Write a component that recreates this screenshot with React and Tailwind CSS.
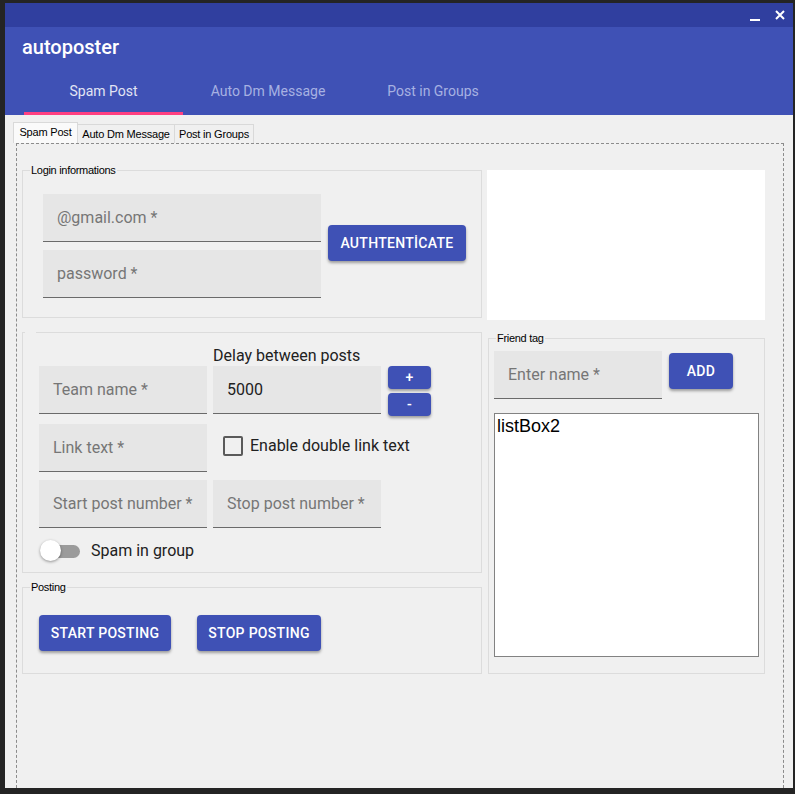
import React from 'react';

// Material-ish text field (filled, underline)
const Field = ({ placeholder, value, width = 'w-[168px]' }) => (
  <div className={`${width} h-[48px] bg-[#e6e6e6] border-b border-[#6a6a6a] flex items-center pl-[14px] font-[Roboto] text-[16px]`}>
    {value ? (
      <span className="text-[#212121]">{value}</span>
    ) : (
      <span className="text-[#767676]">{placeholder}</span>
    )}
  </div>
);

const MatButton = ({ children, className = '' }) => (
  <button
    className={`h-[36px] rounded-[4px] bg-[#3f51b5] text-white font-[Roboto] font-medium text-[14px] tracking-[0.3px] shadow-[0_2px_3px_rgba(0,0,0,0.35)] flex items-center justify-center ${className}`}
  >
    {children}
  </button>
);

// WinForms style group box
const GroupBox = ({ label, className = '', children, gapLabel }) => (
  <div className={`relative border border-[#dcdcdc] ${className}`}>
    {label && (
      <span className="absolute -top-[8px] left-[7px] px-[1px] bg-[#f0f0f0] font-['Liberation_Sans'] text-[11px] tracking-[-0.3px] leading-[14px] text-black">
        {label}
      </span>
    )}
    {gapLabel && <span className="absolute -top-[2px] left-[2px] w-[11px] h-[3px] bg-[#f0f0f0]" />}
    {children}
  </div>
);

const App = () => {
  return (
    <div className="w-[795px] h-[794px] bg-[#242424] pt-[3px] pl-[5px] pr-[2px] pb-[6px] overflow-hidden">
      <div className="w-[788px] h-[785px] flex flex-col bg-[#f0f0f0] overflow-hidden">
        {/* title bar */}
        <div className="h-[24px] bg-[#303f9f] flex items-center justify-end pr-[8px] gap-[15px] shrink-0">
          <svg width="10" height="10" viewBox="0 0 10 10" className="mt-[4px]">
            <rect x="0" y="7" width="10" height="2" fill="white" />
          </svg>
          <svg width="10" height="10" viewBox="0 0 10 10">
            <path d="M1 1 L9 9 M9 1 L1 9" stroke="white" strokeWidth="2" />
          </svg>
        </div>

        {/* header */}
        <div className="h-[88px] bg-[#3f51b5] flex flex-col shrink-0">
          <div className="pl-[17px] pt-[6px] font-[Roboto] font-medium text-[20px] leading-[28px] text-white">
            autoposter
          </div>
          <div className="mt-auto flex h-[48px] pl-[19px] font-[Roboto] text-[14px]">
            <div className="w-[159px] flex flex-col">
              <div className="flex-1 flex items-center justify-center pt-[4px] text-[#e2e5f4]">Spam Post</div>
              <div className="h-[3px] bg-[#ff4081]" />
            </div>
            <div className="w-[170px] flex items-center justify-center text-[#a7b1e2]">Auto Dm Message</div>
            <div className="w-[160px] flex items-center justify-center text-[#a7b1e2]">Post in Groups</div>
          </div>
        </div>

        {/* body */}
        <div className="flex-1 pt-[7px] pl-[8px] flex flex-col">
          {/* winforms tab strip */}
          <div className="h-[21px] flex items-end font-['Liberation_Sans'] text-[11px] tracking-[-0.2px] text-black">
            <div className="w-[65px] h-[21px] bg-[#fafafa] border border-b-0 border-[#d9d9d9] flex items-center justify-center pb-[1px] relative z-10">
              Spam Post
            </div>
            <div className="w-[97px] h-[19px] bg-[#f0f0f0] border border-l-0 border-b-0 border-[#d9d9d9] flex items-center justify-center">
              Auto Dm Message
            </div>
            <div className="w-[79px] h-[19px] bg-[#f0f0f0] border border-l-0 border-b-0 border-[#d9d9d9] flex items-center justify-center">
              Post in Groups
            </div>
          </div>

          {/* tab page */}
          <div className="ml-[3px] w-[768px] flex-1 border border-b-0 border-dashed border-[#8c8c8c] pl-[5px] pt-[26px] flex gap-[5px]">
            {/* left column */}
            <div className="w-[460px] flex flex-col">
              <GroupBox label="Login informations" className="h-[148px] pl-[20px] pt-[23px] flex items-start">
                <div className="flex flex-col gap-[8px]">
                  <Field placeholder="@gmail.com *" width="w-[278px]" />
                  <Field placeholder="password *" width="w-[278px]" />
                </div>
                <MatButton className="ml-[7px] mt-[31px] w-[138px]">AUTHTENTİCATE</MatButton>
              </GroupBox>

              <GroupBox gapLabel className="mt-[14px] h-[241px] pl-[16px] pt-[12px]">
                <div className="h-[21px] pl-[174px] font-[Roboto] text-[16px] leading-[21px] text-[#212121]">
                  Delay between posts
                </div>
                <div className="h-[48px] flex items-start gap-[6px]">
                  <Field placeholder="Team name *" />
                  <Field value="5000" />
                  <div className="ml-[1px] flex flex-col gap-[4px]">
                    <MatButton className="w-[43px] !h-[23px] text-[13px] font-bold">+</MatButton>
                    <MatButton className="w-[43px] !h-[23px] text-[13px] font-bold">-</MatButton>
                  </div>
                </div>
                <div className="mt-[10px] flex items-center">
                  <Field placeholder="Link text *" />
                  <div className="ml-[16px] w-[20px] h-[20px] border-2 border-[#5a5a5a] rounded-[2px] -mt-[4px]" />
                  <span className="ml-[7px] -mt-[5px] font-[Roboto] text-[16px] text-[#212121]">Enable double link text</span>
                </div>
                <div className="mt-[8px] flex gap-[6px]">
                  <Field placeholder="Start post number *" />
                  <Field placeholder="Stop post number *" />
                </div>
                <div className="mt-[12px] h-[22px] flex items-center">
                  <div className="relative w-[41px] h-[22px] flex items-center">
                    <div className="ml-[5px] w-[36px] h-[13px] rounded-full bg-[#9b9b9b]" />
                    <div className="absolute left-[1px] top-0 w-[21px] h-[21px] rounded-full bg-white shadow-[0_1px_3px_rgba(0,0,0,0.4)]" />
                  </div>
                  <span className="ml-[11px] font-[Roboto] text-[16px] text-[#212121]">Spam in group</span>
                </div>
              </GroupBox>

              <GroupBox label="Posting" className="mt-[14px] h-[87px] pl-[16px] pt-[27px] flex items-start gap-[26px]">
                <MatButton className="w-[132px]">START POSTING</MatButton>
                <MatButton className="w-[124px]">STOP POSTING</MatButton>
              </GroupBox>
            </div>

            {/* right column */}
            <div className="w-[278px] flex flex-col">
              <div className="h-[150px] bg-white" />
              <GroupBox label="Friend tag" className="ml-[1px] mt-[18px] w-[277px] h-[336px] pl-[5px] pt-[12px]">
                <div className="flex items-start">
                  <Field placeholder="Enter name *" />
                  <MatButton className="ml-[7px] mt-[2px] w-[64px]">ADD</MatButton>
                </div>
                <div className="mt-[14px] w-[265px] h-[244px] bg-white border border-[#828282] pl-[2px] font-['Liberation_Sans'] text-[18px] leading-[24px] text-black">
                  listBox2
                </div>
              </GroupBox>
            </div>
          </div>
        </div>
      </div>
    </div>
  );
};

export default App;
